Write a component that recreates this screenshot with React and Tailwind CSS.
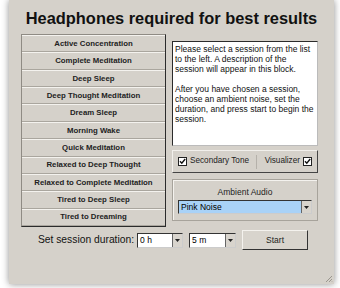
import React from 'react';

const sessions = [
  'Active Concentration',
  'Complete Meditation',
  'Deep Sleep',
  'Deep Thought Meditation',
  'Dream Sleep',
  'Morning Wake',
  'Quick Meditation',
  'Relaxed to Deep Thought',
  'Relaxed to Complete Meditation',
  'Tired to Deep Sleep',
  'Tired to Dreaming',
];

const CheckBox = () => (
  <svg width="9" height="9" viewBox="0 0 9 9" className="shrink-0">
    <rect x="0.5" y="0.5" width="8" height="8" fill="#fff" stroke="#222" />
    <path d="M2 4.2 L3.8 6.2 L7.2 2" fill="none" stroke="#111" strokeWidth="1.4" />
  </svg>
);

const Arrow = () => (
  <div className="w-[10px] h-full bg-[#d8d4cd] border-l border-[#666] flex items-center justify-center">
    <svg width="5" height="3" viewBox="0 0 5 3">
      <path d="M0 0 L5 0 L2.5 3 Z" fill="#222" />
    </svg>
  </div>
);

const Dropdown = ({ value, className }) => (
  <div className={`h-[15px] flex items-stretch bg-white border border-[#333] border-b-[#ccc] border-r-[#ccc] ${className}`}>
    <div className="flex-1 px-[2px] text-[8.5px] leading-[13px] text-black">{value}</div>
    <Arrow />
  </div>
);

export default function App() {
  return (
    <div className="w-[340px] h-[288px] bg-white overflow-hidden" style={{ fontFamily: '"Liberation Sans", Arial, sans-serif' }}>
      <div className="relative ml-[9px] w-[325px] h-[284px] bg-[#d5d1ca] shadow-[0_0_7px_rgba(0,0,0,0.45)] flex flex-col">
        <div className="h-[34px] flex items-center justify-center pt-[2px] text-[16.4px] font-bold text-[#111]">
          Headphones required for best results
        </div>

        <div className="flex pl-[12px] gap-[6px]">
          <div className="w-[145px] h-[193px] flex flex-col border border-[#8f8b84] border-r-[#2b2b2b] border-b-[#2b2b2b]">
            {sessions.map((s) => (
              <div
                key={s}
                className="flex-1 flex items-center justify-center border-t border-t-[#f4f2ee] border-b border-b-[#aaa69e] text-[7.8px] font-bold text-[#222]"
              >
                {s}
              </div>
            ))}
          </div>

          <div className="w-[146px] mt-[7px] flex flex-col">
            <div className="h-[105px] bg-white border border-[#2b2b2b] border-r-[#bbb] border-b-[#bbb] px-[2px] py-[2px] text-[8.5px] leading-[10px] text-[#111]">
              <p>Please select a session from the list to the left. A description of the session will appear in this block.</p>
              <p className="mt-[10px]">After you have chosen a session, choose an ambient noise, set the duration, and press start to begin the session.</p>
            </div>

            <div className="mt-[4px] h-[23px] flex items-center border border-[#f2f0ec] border-r-[#444] border-b-[#444] px-[5px] text-[8.2px] text-[#222]">
              <div className="flex items-center gap-[3px]">
                <CheckBox />
                <span>Secondary Tone</span>
              </div>
              <div className="mx-auto w-px h-[14px] bg-[#b5b1aa]" />
              <div className="flex items-center gap-[3px]">
                <span>Visualizer</span>
                <CheckBox />
              </div>
            </div>

            <div className="mt-[6px] h-[42px] border border-[#a7a39b] shadow-[inset_1px_1px_0_#f4f2ee] px-[5px] pt-[7px] flex flex-col">
              <div className="text-center text-[8.5px] leading-[10px] text-[#222]">Ambient Audio</div>
              <div className="mt-[3px] h-[14px] flex items-stretch bg-[#a9d2f7] border border-[#333] border-b-[#ccc] border-r-[#ccc]">
                <div className="flex-1 px-[2px] text-[8.5px] leading-[12px] text-black">Pink Noise</div>
                <Arrow />
              </div>
            </div>
          </div>
        </div>

        <div className="mt-[3px] h-[20px] flex items-center justify-center pl-[3px]">
          <span className="text-[10.3px] text-[#111] mr-[3px]">Set session duration:</span>
          <Dropdown value="0 h" className="w-[46px]" />
          <Dropdown value="5 m" className="w-[47px] ml-[6px]" />
          <button className="ml-[6px] w-[66px] h-[20px] bg-[#d8d4cd] border border-[#f4f2ee] border-r-[#333] border-b-[#333] text-[8.5px] text-[#222]">
            Start
          </button>
        </div>

        <svg width="9" height="9" viewBox="0 0 9 9" className="absolute right-[1px] bottom-[1px]">
          <path d="M8 2 L2 8 M8 5 L5 8 M8 7.5 L7.5 8" stroke="#8a867f" strokeWidth="0.8" />
        </svg>
      </div>
    </div>
  );
}
